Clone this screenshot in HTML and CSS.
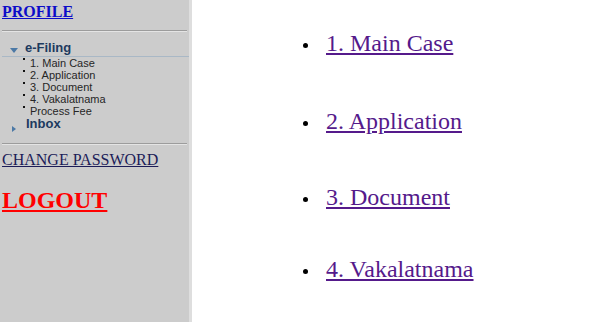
FILE: index.html
```html
<!DOCTYPE html>
<html>
<head>
<meta charset="utf-8">
<title>e-Filing</title>
<link rel="stylesheet" href="styles.css">
</head>
<body>
<div class="page">
  <aside class="sidebar">
    <div class="profile"><a href="#" class="profile-link">PROFILE</a></div>
    <div class="rule"></div>
    <div class="menu-head open">
      <span class="tri-down"></span><span class="menu-title">e-Filing</span>
    </div>
    <ul class="submenu">
      <li>1. Main Case</li>
      <li>2. Application</li>
      <li>3. Document</li>
      <li>4. Vakalatnama</li>
      <li>Process Fee</li>
    </ul>
    <div class="menu-head closed">
      <span class="tri-right"></span><span class="menu-title">Inbox</span>
    </div>
    <div class="rule rule-2"></div>
    <div class="change"><a href="#" class="change-link">CHANGE PASSWORD</a></div>
    <div class="logout"><a href="#" class="logout-link">LOGOUT</a></div>
  </aside>
  <main class="content">
    <ul class="cases">
      <li><a href="#">1. Main Case</a></li>
      <li><a href="#">2. Application</a></li>
      <li class="third"><a href="#">3. Document</a></li>
      <li class="fourth"><a href="#">4. Vakalatnama</a></li>
    </ul>
  </main>
</div>
</body>
</html>
```
FILE: styles.css
```css
html, body {
  margin: 0;
  padding: 0;
  background: #ffffff;
  font-family: "Liberation Serif", "Times New Roman", serif;
}
.page {
  display: flex;
  min-height: 322px;
}
.sidebar {
  width: 189px;
  flex: 0 0 189px;
  background: #cccccc;
  border-right: 3px solid #dedede;
  min-height: 322px;
}
.profile {
  padding-top: 2px;
  padding-left: 2px;
  line-height: 20px;
}
.profile-link {
  font-size: 16px;
  font-weight: bold;
  color: #0c0cc8;
}
.rule {
  margin: 8px 2px 0 2px;
  border-top: 1px solid #9c9c9c;
  border-bottom: 1px solid #e4e4e4;
}
.rule-2 {
  margin-top: 12px;
}
.menu-head {
  display: flex;
  align-items: flex-end;
  font-family: "Liberation Sans", Arial, sans-serif;
  font-weight: bold;
  font-size: 13px;
  color: #1d3a5f;
}
.menu-head.open {
  margin-top: 8px;
  line-height: 16px;
  border-bottom: 1px solid #a9b8c6;
  margin-left: 2px;
}
.menu-head.closed {
  line-height: 14px;
}
.menu-title {
  margin-left: 7px;
}
.tri-down {
  display: inline-block;
  width: 0;
  height: 0;
  margin-left: 8px;
  margin-bottom: 3px;
  border-left: 4.5px solid transparent;
  border-right: 4.5px solid transparent;
  border-top: 5px solid #4c79a6;
}
.tri-right {
  display: inline-block;
  width: 0;
  height: 0;
  margin-left: 12px;
  margin-bottom: -1px;
  margin-right: 3px;
  border-top: 3.5px solid transparent;
  border-bottom: 3.5px solid transparent;
  border-left: 4px solid #4c79a6;
}
.closed .menu-title {
  margin-left: 7px;
}
.submenu {
  list-style: none;
  margin: 0;
  padding: 0 0 0 23px;
  font-family: "Liberation Sans", Arial, sans-serif;
  font-size: 11px;
  line-height: 12px;
  color: #262626;
}
.submenu li::before {
  content: "";
  display: inline-block;
  width: 2px;
  height: 2px;
  background: #111111;
  vertical-align: top;
  margin-top: 1px;
  margin-right: 5px;
}
.change {
  margin-top: 5px;
  padding-left: 2px;
  line-height: 20px;
}
.change-link {
  font-size: 16px;
  color: #1c1c58;
}
.logout {
  margin-top: 16px;
  padding-left: 2px;
  line-height: 28px;
}
.logout-link {
  font-size: 24px;
  font-weight: bold;
  color: #ff0000;
}
.content {
  flex: 1;
}
.cases {
  margin: 29px 0 0 0;
  padding-left: 134px;
  font-size: 24px;
  line-height: 28px;
  list-style: none;
}
.cases li {
  margin-bottom: 50px;
}
.cases li::before {
  content: "";
  display: inline-block;
  width: 5px;
  height: 5px;
  border-radius: 50%;
  background: #000000;
  margin-left: -23px;
  margin-right: 18px;
  vertical-align: 3px;
}
.cases li.third {
  margin-top: -2px;
}
.cases li.fourth {
  margin-top: -6px;
}
.cases a {
  color: #551a8b;
}
```
